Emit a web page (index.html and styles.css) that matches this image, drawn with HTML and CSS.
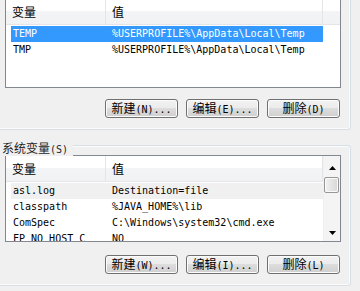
FILE: index.html
```html
<!DOCTYPE html>
<html lang="zh-CN">
<head>
    <meta charset="UTF-8">
    <meta name="viewport" content="width=device-width, initial-scale=1.0">
    <title>环境变量</title>
    <link rel="stylesheet" href="styles.css">
</head>
<body>
    <div class="screen">
        <div class="group group-user">
            <div class="listview lv-user">
                <div class="lv-main">
                    <div class="lv-header">
                        <div class="col col-name">变量</div>
                        <div class="col col-value">值</div>
                        <div class="col col-fill"></div>
                    </div>
                    <div class="lv-rows">
                        <div class="lv-row selected">
                            <span class="cell-name">TEMP</span>
                            <span class="cell-value">%USERPROFILE%\AppData\Local\Temp</span>
                        </div>
                        <div class="lv-row">
                            <span class="cell-name">TMP</span>
                            <span class="cell-value">%USERPROFILE%\AppData\Local\Temp</span>
                        </div>
                    </div>
                </div>
            </div>
            <div class="button-row row-user">
                <button class="win-btn">新建<span class="key">(N)...</span></button>
                <button class="win-btn">编辑<span class="key">(E)...</span></button>
                <button class="win-btn">删除<span class="key">(D)</span></button>
            </div>
        </div>

        <div class="group group-system">
            <div class="group-label">系统变量<span class="key">(S)</span></div>
            <div class="listview lv-system">
                <div class="lv-main">
                    <div class="lv-header">
                        <div class="col col-name">变量</div>
                        <div class="col col-value">值</div>
                    </div>
                    <div class="lv-rows">
                        <div class="lv-row inactive">
                            <span class="cell-name">asl.log</span>
                            <span class="cell-value">Destination=file</span>
                        </div>
                        <div class="lv-row">
                            <span class="cell-name">classpath</span>
                            <span class="cell-value">%JAVA_HOME%\lib</span>
                        </div>
                        <div class="lv-row">
                            <span class="cell-name">ComSpec</span>
                            <span class="cell-value">C:\Windows\system32\cmd.exe</span>
                        </div>
                        <div class="lv-row">
                            <span class="cell-name">FP_NO_HOST_C</span>
                            <span class="cell-value">NO</span>
                        </div>
                    </div>
                </div>
                <div class="scrollbar">
                    <div class="sb-arrow">
                        <svg width="7" height="4" viewBox="0 0 7 4"><path d="M3.5 0 L7 4 L0 4 Z" fill="#000"/></svg>
                    </div>
                    <div class="sb-track">
                        <div class="sb-thumb"></div>
                    </div>
                    <div class="sb-arrow">
                        <svg width="7" height="4" viewBox="0 0 7 4"><path d="M0 0 L7 0 L3.5 4 Z" fill="#000"/></svg>
                    </div>
                </div>
            </div>
            <div class="button-row row-system">
                <button class="win-btn">新建<span class="key">(W)...</span></button>
                <button class="win-btn">编辑<span class="key">(I)...</span></button>
                <button class="win-btn">删除<span class="key">(L)</span></button>
            </div>
        </div>
    </div>
</body>
</html>
```

FILE: styles.css
```css
body {
    margin: 0;
    background: #f0f0f0;
    font-family: "Noto Sans CJK SC", sans-serif;
    font-size: 12px;
    color: #000;
    overflow: hidden;
}

.screen {
    width: 360px;
    height: 291px;
    overflow: hidden;
}

.key {
    font-family: "DejaVu Sans Mono", monospace;
    font-size: 10px;
}

/* group boxes */
.group {
    position: relative;
    box-sizing: border-box;
    width: 355px;
    margin-left: -4px;
    border: 1px solid #d5dfe5;
    border-radius: 3px;
    box-shadow: inset 0 0 0 1px #fbfbfb;
    padding: 9px 9px 11px 8px;
}

.group-user {
    margin-top: -12px;
}

.group-system {
    margin-top: 15px;
}

.group-label {
    position: absolute;
    top: -5px;
    left: 3px;
    padding: 0 5px 0 2px;
    background: #f0f0f0;
    line-height: 13px;
    color: #1e1e1e;
}

/* list view */
.listview {
    display: flex;
    border: 1px solid #828790;
    background: #fff;
    overflow: hidden;
}

.lv-user {
    height: 88px;
}

.lv-system {
    height: 85px;
}

.lv-main {
    flex: 1;
    overflow: hidden;
}

.lv-header {
    display: flex;
    height: 25px;
    border-bottom: 1px solid #e3e5e8;
    background: linear-gradient(#ffffff 0, #ffffff 50%, #f3f4f6 50%, #f1f2f4 100%);
}

.col {
    box-sizing: border-box;
    padding-left: 6px;
    line-height: 25px;
    border-right: 1px solid #e3e5e8;
}

.col-name {
    width: 100px;
}

.col-value {
    width: 217px;
}

.col-fill {
    flex: 1;
    border-right: none;
}

.lv-rows {
    padding-top: 1px;
}

.lv-row {
    display: flex;
    width: 312px;
    height: 16px;
    margin-left: 5px;
    font-family: "DejaVu Sans Mono", monospace;
    font-size: 10px;
    line-height: 16px;
    white-space: nowrap;
}

.lv-row.selected {
    background: #3399ff;
    color: #fff;
}

.lv-row.inactive {
    background: #f0f0f0;
}

.cell-name {
    box-sizing: border-box;
    width: 95px;
    padding-left: 2px;
}

.cell-value {
    padding-left: 6px;
}

/* scrollbar */
.scrollbar {
    display: flex;
    flex-direction: column;
    width: 17px;
    background: #f4f4f4;
    border-left: 1px solid #f0f0f0;
    box-sizing: border-box;
}

.sb-arrow {
    display: flex;
    align-items: center;
    justify-content: center;
    height: 17px;
}

.sb-arrow:first-child {
    align-items: flex-end;
    padding-bottom: 3px;
    box-sizing: border-box;
}

.sb-track {
    flex: 1;
    padding: 4px 1px 0 0;
}

.sb-thumb {
    height: 16px;
    box-sizing: border-box;
    border: 1px solid #979797;
    border-radius: 2px;
    background: linear-gradient(90deg, #f2f2f2, #e4e4e4 50%, #d8d8d8);
    box-shadow: inset 0 0 0 1px #fafafa;
}

/* buttons */
.button-row {
    display: flex;
    justify-content: flex-end;
    gap: 8px;
    padding-right: 1px;
}

.row-user {
    margin-top: 11px;
}

.row-system {
    margin-top: 13px;
}

.win-btn {
    width: 73px;
    height: 19px;
    padding: 0;
    border: 1px solid #707070;
    border-radius: 3px;
    background: linear-gradient(#f2f2f2 0, #ebebeb 50%, #dddddd 50%, #cfcfcf 100%);
    box-shadow: inset 0 0 0 1px #fcfcfc;
    font-family: "Noto Sans CJK SC", sans-serif;
    font-size: 12px;
    line-height: 16px;
    color: #000;
}
```
